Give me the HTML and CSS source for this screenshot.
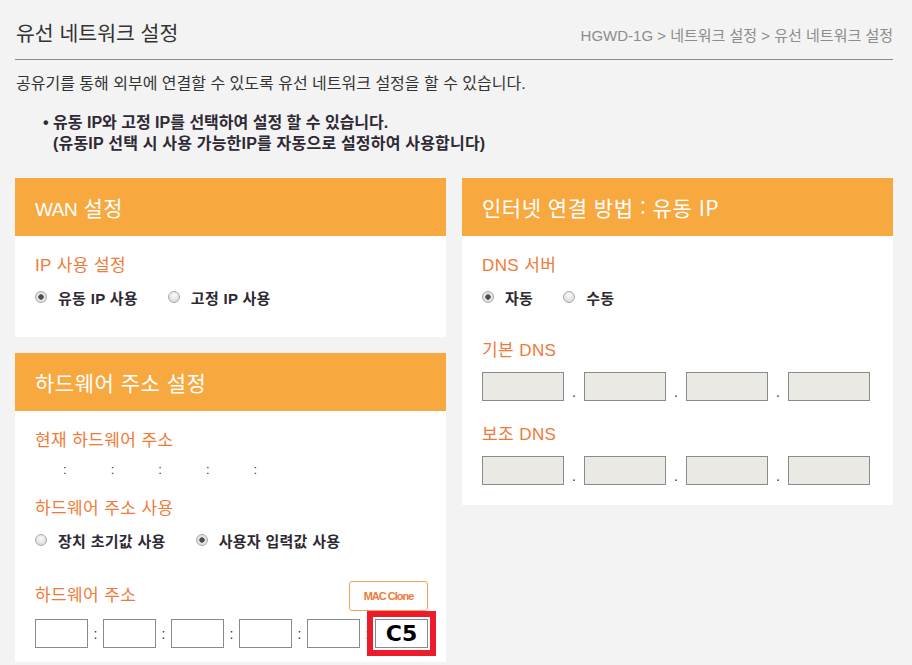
FILE: index.html
```html
<!doctype html>
<html lang="ko">
<head>
    <meta charset="UTF-8">
    <meta name="viewport" content="width=device-width, initial-scale=1.0">
    <title>유선 네트워크 설정</title>
    <link rel="stylesheet" href="styles.css">
</head>
<body>
    <div class="page">
        <div class="page-head">
            <h1>유선 네트워크 설정</h1>
            <div class="path">HGWD-1G &gt; 네트워크 설정 &gt; 유선 네트워크 설정</div>
        </div>
        <p class="desc">공유기를 통해 외부에 연결할 수 있도록 유선 네트워크 설정을 할 수 있습니다.</p>
        <div class="notes">
            <p>• 유동 IP와 고정 IP를 선택하여 설정 할 수 있습니다.</p>
            <p>(유동IP 선택 시 사용 가능한IP를 자동으로 설정하여 사용합니다)</p>
        </div>

        <div class="columns">
            <div class="col">
                <!-- WAN -->
                <section class="panel">
                    <h2 class="panel-title"><span class="en">WAN</span> 설정</h2>
                    <div class="panel-body">
                        <div class="field">
                            <div class="label">IP 사용 설정</div>
                            <div class="radios">
                                <label class="radio"><input type="radio" name="ipType" checked> 유동 IP 사용</label>
                                <label class="radio"><input type="radio" name="ipType"> 고정 IP 사용</label>
                            </div>
                        </div>
                    </div>
                </section>

                <!-- 하드웨어 주소 -->
                <section class="panel">
                    <h2 class="panel-title">하드웨어 주소 설정</h2>
                    <div class="panel-body hw-body">
                        <div class="field">
                            <div class="label label-current">현재 하드웨어 주소</div>
                            <div class="mac-current">
                                <span>:</span><span>:</span><span>:</span><span>:</span><span>:</span>
                            </div>
                        </div>
                        <div class="field field-use">
                            <div class="label">하드웨어 주소 사용</div>
                            <div class="radios">
                                <label class="radio"><input type="radio" name="macType"> 장치 초기값 사용</label>
                                <label class="radio"><input type="radio" name="macType" checked> 사용자 입력값 사용</label>
                            </div>
                        </div>
                        <div class="field field-mac">
                            <div class="label-row">
                                <div class="label">하드웨어 주소</div>
                                <button class="btn-clone">MAC Clone</button>
                            </div>
                            <div class="mac-inputs">
                                <input type="text" class="mac">
                                <span class="sep">:</span>
                                <input type="text" class="mac">
                                <span class="sep">:</span>
                                <input type="text" class="mac">
                                <span class="sep">:</span>
                                <input type="text" class="mac">
                                <span class="sep">:</span>
                                <input type="text" class="mac">
                                <span class="sep">:</span>
                                <input type="text" class="mac mac-mark" value="C5">
                            </div>
                        </div>
                    </div>
                </section>
            </div>

            <div class="col">
                <!-- 인터넷 연결 방법 -->
                <section class="panel">
                    <h2 class="panel-title">인터넷 연결 방법 : 유동 IP</h2>
                    <div class="panel-body">
                        <div class="field">
                            <div class="label">DNS 서버</div>
                            <div class="radios">
                                <label class="radio"><input type="radio" name="dnsType" checked> 자동</label>
                                <label class="radio"><input type="radio" name="dnsType"> 수동</label>
                            </div>
                        </div>
                        <div class="field">
                            <div class="label">기본 DNS</div>
                            <div class="ip-inputs">
                                <input type="text" class="ip" disabled>
                                <span class="dot">.</span>
                                <input type="text" class="ip" disabled>
                                <span class="dot">.</span>
                                <input type="text" class="ip" disabled>
                                <span class="dot">.</span>
                                <input type="text" class="ip" disabled>
                            </div>
                        </div>
                        <div class="field">
                            <div class="label">보조 DNS</div>
                            <div class="ip-inputs">
                                <input type="text" class="ip" disabled>
                                <span class="dot">.</span>
                                <input type="text" class="ip" disabled>
                                <span class="dot">.</span>
                                <input type="text" class="ip" disabled>
                                <span class="dot">.</span>
                                <input type="text" class="ip" disabled>
                            </div>
                        </div>
                    </div>
                </section>
            </div>
        </div>
    </div>
</body>
</html>
```

FILE: styles.css
```css
* {margin:0; padding:0; box-sizing: border-box;}
html, body {overflow: hidden;}
body {
    background: #f3f3f3;
    color: #333;
    font-family: "Liberation Sans", "Noto Sans CJK KR", sans-serif;
    font-size: 14px;
}
.page {
    width: 878px;
    margin-left: 15px;
    padding-top: 19px;
}

/* 상단 제목 */
.page-head {
    display: flex;
    justify-content: space-between;
    align-items: baseline;
    padding-bottom: 10px;
    border-bottom: 1px solid #8a8a8a;
}
.page-head h1 {
    font-size: 20.5px;
    font-weight: normal;
    line-height: 30px;
    color: #333;
    padding-left: 1px;
}
.path {
    font-size: 15px;
    color: #8c8c8c;
}
.desc {
    margin-top: 13px;
    padding-left: 1px;
    font-size: 16px;
    line-height: 22px;
}
.notes {
    margin-top: 17px;
    padding-left: 38px;
    font-size: 16px;
    font-weight: bold;
    line-height: 21px;
    color: #2f2935;
}
.notes p:first-child {text-indent: -10px;}
.notes p + p {letter-spacing: 0.2px;}

/* 패널 */
.columns {
    display: grid;
    grid-template-columns: 431px 431px;
    gap: 16px;
    align-items: start;
    margin-top: 24px;
}
.col {
    display: flex;
    flex-direction: column;
    gap: 16px;
}
.panel {background: #fff;}
.panel-title {
    height: 58px;
    line-height: 58px;
    padding-left: 20px;
    background: #f7a83f;
    color: #fff;
    font-family: "Noto Sans CJK KR", sans-serif;
    font-size: 21px;
    font-weight: normal;
    letter-spacing: 0.5px;
}
.panel-title .en {
    font-family: "Liberation Sans", sans-serif;
    font-size: 19px;
    letter-spacing: -0.5px;
}
.panel-body {padding: 20px 18px 20px 20px;}
.field + .field {margin-top: 24px;}
.label {
    font-size: 17px;
    letter-spacing: 0.4px;
    line-height: 20px;
    color: #ee7b39;
    margin-bottom: 11px;
}

/* 라디오 */
.radios {
    display: flex;
    gap: 30px;
    padding-bottom: 10px;
}
.radio {
    display: flex;
    align-items: center;
    gap: 11px;
    height: 20px;
    font-size: 15px;
    letter-spacing: 0.3px;
    font-weight: bold;
    color: #2f2935;
}
.radio input {
    appearance: none;
    -webkit-appearance: none;
    width: 12px;
    height: 12px;
    margin: 0;
    border-radius: 50%;
    border: 1px solid #aaa;
    background: radial-gradient(circle at 50% 35%, #fafafa, #d2d2d2);
}
.radio input:checked {
    background: radial-gradient(circle, #4d4d4d 0 2.4px, #eaeaea 3px, #cfcfcf 100%);
}

/* DNS */
.ip-inputs {
    display: flex;
    align-items: flex-end;
}
.ip {
    width: 82px;
    height: 29px;
    border: 1px solid #8a8a8a;
    background: #ebe9e3;
}
.dot {
    width: 20px;
    text-align: center;
    font-size: 14px;
    line-height: 14px;
    padding-bottom: 2px;
}

/* 하드웨어 주소 */
.hw-body {padding-bottom: 14px;}
.label-current {margin-bottom: 9px;}
.mac-current {
    display: flex;
    gap: 44px;
    height: 20px;
    line-height: 20px;
    padding-left: 28px;
    font-size: 13px;
    color: #333;
}
.field + .field-use {margin-top: 19px;}
.field + .field-mac {margin-top: 21px;}
.label-row {
    display: flex;
    justify-content: space-between;
    align-items: center;
    height: 30px;
    margin-bottom: 8px;
}
.label-row .label {margin-bottom: 0;}
.btn-clone {
    width: 79px;
    height: 30px;
    border: 1px solid #f0a25a;
    border-radius: 3px;
    background: #fff;
    color: #ee7b39;
    font-family: "Liberation Sans", sans-serif;
    font-size: 11px;
    font-weight: bold;
    letter-spacing: -1px;
    cursor: pointer;
}
.mac-inputs {
    display: flex;
    align-items: center;
}
.mac {
    width: 53px;
    height: 29px;
    border: 1px solid #8a8a8a;
    background: #fff;
    outline: none;
}
.sep {
    width: 15px;
    text-align: center;
    font-size: 14px;
}
.mac-mark {
    outline: 6px solid #ec1c2c;
    outline-offset: 2px;
    text-align: center;
    font-family: "DejaVu Sans", sans-serif;
    font-size: 22px;
    font-weight: bold;
    color: #000;
}
```
